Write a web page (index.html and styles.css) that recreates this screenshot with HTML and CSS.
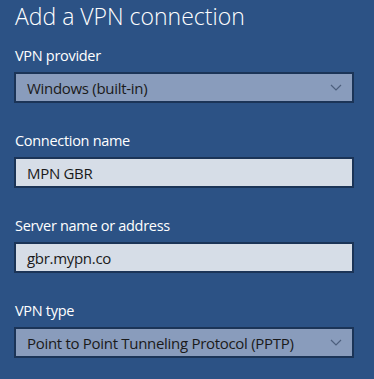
FILE: index.html
```html
<!DOCTYPE html>
<html lang="en">
<head>
    <meta charset="UTF-8">
    <title>Add a VPN connection</title>
    <link rel="stylesheet" href="styles.css">
</head>
<body>
    <div class="panel">
        <h1>Add a VPN connection</h1>

        <div class="field">
            <label>VPN provider</label>
            <div class="select">
                <span>Windows (built-in)</span>
                <svg class="chevron" width="12" height="7" viewBox="0 0 12 7"><path d="M1 1 L6 6 L11 1" fill="none" stroke="#4d5f7d" stroke-width="1.2"/></svg>
            </div>
        </div>

        <div class="field">
            <label>Connection name</label>
            <div class="input">MPN GBR</div>
        </div>

        <div class="field">
            <label>Server name or address</label>
            <div class="input">gbr.mypn.co</div>
        </div>

        <div class="field">
            <label>VPN type</label>
            <div class="select">
                <span>Point to Point Tunneling Protocol (PPTP)</span>
                <svg class="chevron" width="12" height="7" viewBox="0 0 12 7"><path d="M1 1 L6 6 L11 1" fill="none" stroke="#4d5f7d" stroke-width="1.2"/></svg>
            </div>
        </div>
    </div>
</body>
</html>
```

FILE: styles.css
```css
* {
    margin: 0;
    padding: 0;
    box-sizing: border-box;
}

body {
    font-family: "Open Sans", "Noto Sans", sans-serif;
    background: #2c5285;
    color: #fff;
    width: 374px;
    height: 379px;
    overflow: hidden;
}

.panel {
    padding: 0 20px 0 14px;
}

h1 {
    font-size: 23px;
    font-weight: 300;
    line-height: 32px;
    padding-left: 1px;
    margin-bottom: 14px;
}

.field {
    margin-bottom: 28px;
}

label {
    display: block;
    font-size: 14.5px;
    letter-spacing: -0.3px;
    line-height: 20px;
    padding-left: 1px;
    margin-bottom: 6px;
}

.select,
.input {
    height: 31px;
    border: 2px solid #1b3457;
    display: flex;
    align-items: center;
    padding: 0 10px 0 11px;
    font-size: 15px;
    letter-spacing: -0.3px;
    color: #1a1a1a;
}

.select {
    background: #899cbc;
    justify-content: space-between;
}

.input {
    background: #d6dde7;
}
```
